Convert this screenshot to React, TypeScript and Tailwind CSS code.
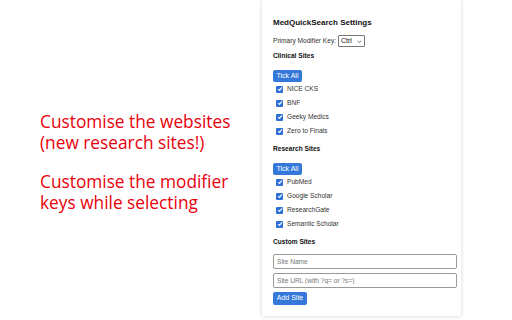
const clinicalSites = ['NICE CKS', 'BNF', 'Geeky Medics', 'Zero to Finals'];
const researchSites = ['PubMed', 'Google Scholar', 'ResearchGate', 'Semantic Scholar'];

function Checkbox() {
  return (
    <span className="flex h-[7px] w-[7px] items-center justify-center rounded-[1px] bg-[#2f6fd6]">
      <svg viewBox="0 0 10 10" className="h-[6px] w-[6px]">
        <path d="M2 5.2 L4.2 7.4 L8.2 2.4" fill="none" stroke="white" strokeWidth="1.8" />
      </svg>
    </span>
  );
}

function SiteRow({ name }: { name: string }) {
  return (
    <label className="flex h-[14px] items-center gap-[4px] pl-[3px] text-[6.6px] text-[#333]">
      <Checkbox />
      <span>{name}</span>
    </label>
  );
}

function BlueButton({ children, className }: { children: React.ReactNode; className?: string }) {
  return (
    <button
      className={`flex h-[12px] items-center justify-center self-start rounded-[2px] bg-[#3478d9] px-[3px] text-[7px] text-white ${className ?? ''}`}
    >
      {children}
    </button>
  );
}

export default function App() {
  return (
    <div className="flex h-[320px] w-[512px] overflow-hidden bg-white" style={{ fontFamily: '"Liberation Sans", Arial, sans-serif' }}>
      {/* promo text */}
      <div className="flex w-[262px] flex-col pl-[40px] pt-[111px] text-[17.3px] leading-[21px] text-[#e8000b]" style={{ fontFamily: '"Open Sans", Lato, sans-serif' }}>
        <p>Customise the websites</p>
        <p>(new research sites!)</p>
        <p className="mt-[18px]">Customise the modifier</p>
        <p>keys while selecting</p>
      </div>

      {/* settings panel */}
      <div className="flex w-[199px] flex-col self-start px-[11px] pb-[11px] pt-[18px] shadow-[0_0_4px_rgba(0,0,0,0.18)]">
        <h1 className="h-[10px] text-[8px] font-bold leading-[10px] text-[#111]">MedQuickSearch Settings</h1>

        <div className="mt-[7px] flex h-[12px] items-center gap-[2px] text-[6.6px] text-[#333]">
          <span>Primary Modifier Key:</span>
          <div className="flex h-[12px] w-[27px] items-center justify-between rounded-[1px] border border-[#777] px-[2px] text-[7px] text-[#111]">
            <span>Ctrl</span>
            <svg viewBox="0 0 10 10" className="h-[5px] w-[5px]">
              <path d="M1.5 3.5 L5 7 L8.5 3.5" fill="none" stroke="#333" strokeWidth="1.3" />
            </svg>
          </div>
        </div>

        <h2 className="mt-[4px] h-[10px] text-[6.6px] font-bold leading-[10px] text-[#111]">Clinical Sites</h2>
        <BlueButton className="mt-[9px] w-[29px]">Tick All</BlueButton>
        {clinicalSites.map((s) => (
          <SiteRow key={s} name={s} />
        ))}

        <h2 className="mt-[6px] h-[10px] text-[6.6px] font-bold leading-[10px] text-[#111]">Research Sites</h2>
        <BlueButton className="mt-[9px] w-[29px]">Tick All</BlueButton>
        {researchSites.map((s) => (
          <SiteRow key={s} name={s} />
        ))}

        <h2 className="mt-[6px] h-[10px] text-[6.6px] font-bold leading-[10px] text-[#111]">Custom Sites</h2>
        <input
          placeholder="Site Name"
          className="mt-[7px] h-[15px] w-[184px] rounded-[2px] border border-[#999] px-[3px] text-[6.6px] outline-none placeholder:text-[#777]"
        />
        <input
          placeholder="Site URL (with ?q= or ?s=)"
          className="mt-[4px] h-[15px] w-[184px] rounded-[2px] border border-[#999] px-[3px] text-[6.6px] outline-none placeholder:text-[#777]"
        />
        <BlueButton className="mt-[4px] h-[13px] w-[34px]">Add Site</BlueButton>
      </div>
    </div>
  );
}
